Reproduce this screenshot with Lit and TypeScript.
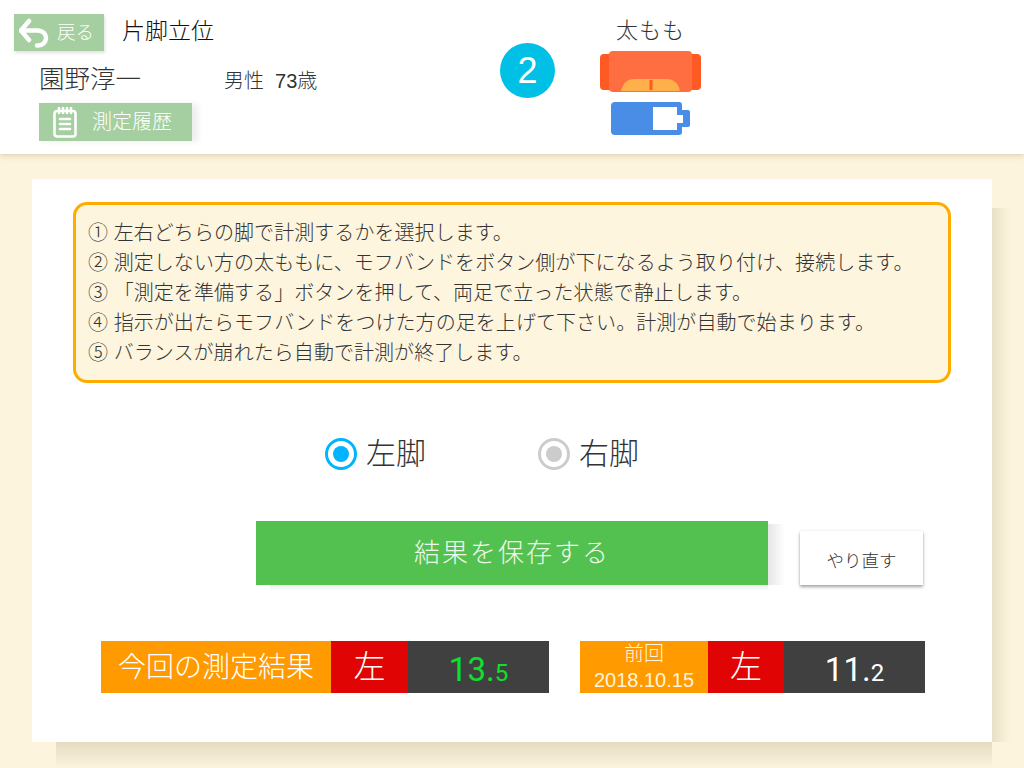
import { LitElement, html, css } from "lit";
import { customElement } from "lit/decorators.js";

const STEPS = [
  "① 左右どちらの脚で計測するかを選択します。",
  "② 測定しない方の太ももに、モフバンドをボタン側が下になるよう取り付け、接続します。",
  "③ 「測定を準備する」ボタンを押して、両足で立った状態で静止します。",
  "④ 指示が出たらモフバンドをつけた方の足を上げて下さい。計測が自動で始まります。",
  "⑤ バランスが崩れたら自動で計測が終了します。",
];

@customElement("app-root")
export class AppRoot extends LitElement {
  static styles = css`
    :host {
      display: block;
      width: 1024px;
      height: 768px;
      overflow: hidden;
      position: relative;
      background: #fdf4dd;
      font-family: "Liberation Sans", "Noto Sans CJK JP", sans-serif;
      font-weight: 300;
      color: #333;
    }

    /* header */
    .header {
      height: 154px;
      box-sizing: border-box;
      background: #fff;
      display: flex;
      box-shadow: 0 1px 6px rgba(120, 100, 50, 0.3);
      position: relative;
    }
    .left {
      width: 500px;
      padding: 14px 0 0 14px;
      box-sizing: border-box;
    }
    .top-row {
      display: flex;
      align-items: center;
      height: 37px;
    }
    .back {
      width: 90px;
      height: 37px;
      background: #a5cfa0;
      color: #fff;
      display: flex;
      align-items: center;
      font-size: 18.5px;
      box-shadow: 1px 2px 3px rgba(0, 0, 0, 0.12);
    }
    .back svg {
      margin: 0 6px 0 5px;
    }
    .back span {
      padding-bottom: 3px;
    }
    .title {
      margin-left: 18px;
      padding-bottom: 7px;
      font-size: 23px;
      color: #111;
    }
    .person {
      display: flex;
      align-items: baseline;
      margin: 7px 0 0 25px;
      height: 30px;
    }
    .name {
      font-size: 25.5px;
      width: 185px;
    }
    .attrs {
      font-size: 20px;
      white-space: pre;
      padding-top: 1px;
    }
    .history {
      margin: 15px 0 0 25px;
      width: 153px;
      height: 38px;
      background: #a5cfa0;
      color: #fff;
      display: flex;
      align-items: center;
      font-size: 20px;
      box-shadow: 6px 1px 6px rgba(0, 0, 0, 0.07);
    }
    .history svg {
      margin: 0 15px 0 14px;
    }
    .history span {
      padding-bottom: 4px;
    }
    .count {
      width: 55px;
      height: 55px;
      margin-top: 43px;
      border-radius: 50%;
      background: #00c0e6;
      color: #fff;
      font-size: 36px;
      display: flex;
      align-items: center;
      justify-content: center;
    }
    .sensor {
      margin-left: 45px;
      width: 101px;
      display: flex;
      flex-direction: column;
      align-items: center;
    }
    .sensor-label {
      margin-top: 17px;
      font-size: 22px;
      line-height: 28px;
      height: 34px;
      letter-spacing: 1px;
      white-space: nowrap;
    }
    .sensor svg {
      display: block;
    }
    .battery {
      margin-top: 10px;
    }

    /* card */
    .card {
      position: absolute;
      left: 32px;
      top: 179px;
      width: 960px;
      height: 563px;
      box-sizing: border-box;
      background: #fff;
      padding: 23px 41px 0;
    }
    .shade-right {
      position: absolute;
      left: 992px;
      top: 208px;
      width: 18px;
      height: 534px;
      background: linear-gradient(to right, #e8dfc6, #fdf4dd);
    }
    .shade-bottom {
      position: absolute;
      left: 56px;
      top: 742px;
      width: 936px;
      height: 26px;
      background: linear-gradient(to bottom, #e4dbc2, #fdf4dd);
    }
    .notes {
      width: 878px;
      height: 181px;
      box-sizing: border-box;
      border: 3px solid #ffab00;
      border-radius: 14px;
      background: #fef5df;
      padding: 13px 12px;
      font-size: 20px;
      line-height: 30px;
      letter-spacing: 0.06px;
    }
    .notes div {
      white-space: nowrap;
    }

    .radios {
      display: flex;
      margin: 55px 0 0 252px;
      height: 32px;
      align-items: center;
      font-size: 30px;
    }
    .radio {
      display: flex;
      align-items: center;
      gap: 9px;
      width: 213px;
    }
    .radio span:last-child {
      padding-bottom: 6px;
    }
    .dot {
      width: 32px;
      height: 32px;
      box-sizing: border-box;
      border-radius: 50%;
      border: 3px solid #ccc;
      display: flex;
      align-items: center;
      justify-content: center;
    }
    .dot::after {
      content: "";
      width: 16px;
      height: 16px;
      border-radius: 50%;
      background: #ccc;
    }
    .dot.on {
      border-color: #00b4ff;
    }
    .dot.on::after {
      background: #00b4ff;
    }

    .actions {
      display: flex;
      align-items: flex-end;
      margin: 51px 0 0 183px;
    }
    .save {
      position: relative;
      width: 512px;
      height: 64px;
      box-sizing: border-box;
      padding-bottom: 6px;
      background: #53c150;
      color: #eef8ea;
      font-size: 26px;
      letter-spacing: 2px;
      display: flex;
      align-items: center;
      justify-content: center;
    }
    .save::before {
      content: "";
      position: absolute;
      left: 100%;
      top: 3px;
      bottom: 0;
      width: 17px;
      background: linear-gradient(to right, #e6e6e6, #fff);
    }
    .save::after {
      content: "";
      position: absolute;
      left: 14px;
      right: 0;
      top: 100%;
      height: 6px;
      background: linear-gradient(to bottom, #ececec, #fff);
    }
    .redo {
      margin-left: 32px;
      width: 123px;
      height: 54px;
      background: #fff;
      box-shadow: 0 2px 3px rgba(0, 0, 0, 0.35), 0 0 2px rgba(0, 0, 0, 0.08);
      font-size: 17.5px;
      display: flex;
      align-items: center;
      justify-content: center;
      padding-top: 2px;
      box-sizing: border-box;
    }

    .results {
      display: flex;
      margin: 56px 0 0 28px;
      height: 52px;
      color: #fff;
    }
    .result {
      display: flex;
      height: 100%;
    }
    .result + .result {
      margin-left: 31px;
    }
    .tag {
      background: #ff9a00;
      display: flex;
      flex-direction: column;
      align-items: center;
      justify-content: center;
    }
    .tag.now {
      width: 230px;
      font-size: 28px;
      padding-bottom: 4px;
      box-sizing: border-box;
    }
    .tag.prev {
      width: 128px;
      font-size: 20px;
      line-height: 26px;
      color: #fff4dc;
    }
    .side {
      background: #e00404;
      font-size: 32px;
      padding-bottom: 7px;
      box-sizing: border-box;
      display: flex;
      align-items: center;
      justify-content: center;
    }
    .side.now {
      width: 77px;
    }
    .side.prev {
      width: 76px;
    }
    .value {
      width: 141px;
      background: #404040;
      font-family: Roboto, "Liberation Sans", sans-serif;
      font-weight: 400;
      font-size: 33px;
      display: flex;
      align-items: baseline;
      justify-content: center;
      padding-top: 9px;
      box-sizing: border-box;
    }
    .value.fresh {
      color: #0fe02c;
    }
    .value small {
      font-size: 24px;
    }
  `;

  render() {
    return html`
      <div class="shade-right"></div>
      <div class="shade-bottom"></div>
      <div class="card">
        <div class="notes">
          ${STEPS.map((s) => html`<div>${s}</div>`)}
        </div>
        <div class="radios">
          <div class="radio"><span class="dot on"></span><span>左脚</span></div>
          <div class="radio"><span class="dot"></span><span>右脚</span></div>
        </div>
        <div class="actions">
          <div class="save">結果を保存する</div>
          <div class="redo">やり直す</div>
        </div>
        <div class="results">
          <div class="result">
            <div class="tag now">今回の測定結果</div>
            <div class="side now">左</div>
            <div class="value fresh">13.<small>5</small></div>
          </div>
          <div class="result">
            <div class="tag prev"><span>前回</span><span>2018.10.15</span></div>
            <div class="side prev">左</div>
            <div class="value">11.<small>2</small></div>
          </div>
        </div>
      </div>
      <div class="header">
        <div class="left">
          <div class="top-row">
            <div class="back">
              <svg width="32" height="30" viewBox="0 0 32 30" fill="none" stroke="#fff" stroke-width="4.5" stroke-linecap="round" stroke-linejoin="round">
                <path d="M10 3 2 12.5l8 9.5" />
                <path d="M2 12.5h17a8 7.5 0 0 1 0 15h-1" />
              </svg>
              <span>戻る</span>
            </div>
            <div class="title">片脚立位</div>
          </div>
          <div class="person">
            <div class="name">園野淳一</div>
            <div class="attrs">男性  73歳</div>
          </div>
          <div class="history">
            <svg width="24" height="31" viewBox="0 0 24 31" fill="none" stroke="#fff" stroke-width="2.6" stroke-linecap="round">
              <rect x="1.5" y="4" width="21" height="25.5" rx="2.5" />
              <path d="M6 1v5M10 1v5M14 1v5M18 1v5M7 12h10M7 17h10M7 22h10" />
            </svg>
            <span>測定履歴</span>
          </div>
        </div>
        <div class="count">2</div>
        <div class="sensor">
          <div class="sensor-label">太もも</div>
          <svg width="101" height="41" viewBox="0 0 101 41">
            <rect x="0" y="3" width="101" height="36" rx="4" fill="#ff5a23" />
            <rect x="9" y="0" width="83" height="41" rx="4" fill="#ff6e40" />
            <path d="M21 40c2-9 7-12 14-12h31c7 0 12 3 14 12z" fill="#ffb04a" />
            <rect x="49.5" y="29" width="3" height="10" fill="#ff5a23" />
          </svg>
          <svg class="battery" width="79" height="33" viewBox="0 0 79 33">
            <path d="M4 0h64a3 3 0 0 1 3 3v5h6a2 2 0 0 1 2 2v13a2 2 0 0 1-2 2h-6v5a3 3 0 0 1-3 3H4a4 4 0 0 1-4-3V4a4 4 0 0 1 4-4z" fill="#4a8de6" />
            <path d="M42 5h24v8h6v8h-6v7H42z" fill="#fff" />
          </svg>
        </div>
      </div>
    `;
  }
}
